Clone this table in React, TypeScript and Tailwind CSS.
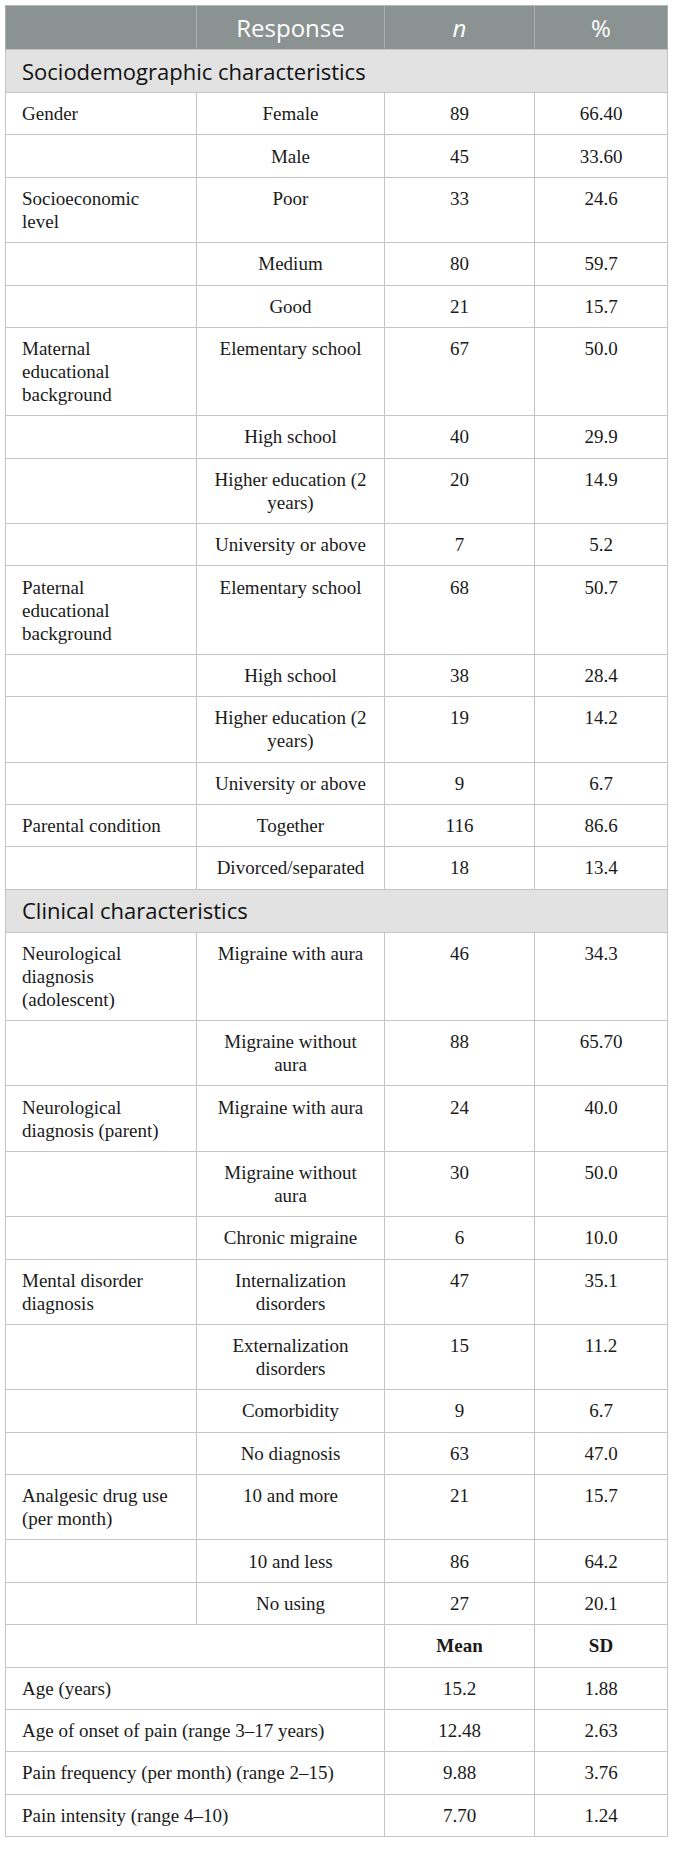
import React from "react";

type Row = {
  label?: string;
  response?: string;
  n: string;
  pct: string;
  wide?: boolean;
  bold?: boolean;
};

const socio: Row[] = [
  { label: "Gender", response: "Female", n: "89", pct: "66.40" },
  { response: "Male", n: "45", pct: "33.60" },
  { label: "Socioeconomic level", response: "Poor", n: "33", pct: "24.6" },
  { response: "Medium", n: "80", pct: "59.7" },
  { response: "Good", n: "21", pct: "15.7" },
  { label: "Maternal educational background", response: "Elementary school", n: "67", pct: "50.0" },
  { response: "High school", n: "40", pct: "29.9" },
  { response: "Higher education (2 years)", n: "20", pct: "14.9" },
  { response: "University or above", n: "7", pct: "5.2" },
  { label: "Paternal educational background", response: "Elementary school", n: "68", pct: "50.7" },
  { response: "High school", n: "38", pct: "28.4" },
  { response: "Higher education (2 years)", n: "19", pct: "14.2" },
  { response: "University or above", n: "9", pct: "6.7" },
  { label: "Parental condition", response: "Together", n: "116", pct: "86.6" },
  { response: "Divorced/separated", n: "18", pct: "13.4" },
];

const clinical: Row[] = [
  { label: "Neurological diagnosis (adolescent)", response: "Migraine with aura", n: "46", pct: "34.3" },
  { response: "Migraine without aura", n: "88", pct: "65.70" },
  { label: "Neurological diagnosis (parent)", response: "Migraine with aura", n: "24", pct: "40.0" },
  { response: "Migraine without aura", n: "30", pct: "50.0" },
  { response: "Chronic migraine", n: "6", pct: "10.0" },
  { label: "Mental disorder diagnosis", response: "Internalization disorders", n: "47", pct: "35.1" },
  { response: "Externalization disorders", n: "15", pct: "11.2" },
  { response: "Comorbidity", n: "9", pct: "6.7" },
  { response: "No diagnosis", n: "63", pct: "47.0" },
  { label: "Analgesic drug use (per month)", response: "10 and more", n: "21", pct: "15.7" },
  { response: "10 and less", n: "86", pct: "64.2" },
  { response: "No using", n: "27", pct: "20.1" },
  { label: "", n: "Mean", pct: "SD", wide: true, bold: true },
  { label: "Age (years)", n: "15.2", pct: "1.88", wide: true },
  { label: "Age of onset of pain (range 3–17 years)", n: "12.48", pct: "2.63", wide: true },
  { label: "Pain frequency (per month) (range 2–15)", n: "9.88", pct: "3.76", wide: true },
  { label: "Pain intensity (range 4–10)", n: "7.70", pct: "1.24", wide: true },
];

const cell = "border border-[#c4c4c4] align-top py-[9.2px] leading-[23px]";

function BodyRow({ row }: { row: Row }) {
  const num = row.bold ? "font-bold" : "";
  return (
    <tr>
      {row.wide ? (
        <td colSpan={2} className={`${cell} pl-4 pr-2 text-left`}>
          {row.label}
        </td>
      ) : (
        <>
          <td className={`${cell} pl-4 pr-[24px] text-left`}>{row.label}</td>
          <td className={`${cell} px-3 text-center`}>{row.response}</td>
        </>
      )}
      <td className={`${cell} px-2 text-center ${num}`}>{row.n}</td>
      <td className={`${cell} px-2 text-center ${num}`}>{row.pct}</td>
    </tr>
  );
}

function SectionRow({ title }: { title: string }) {
  return (
    <tr>
      <td
        colSpan={4}
        className="border border-[#c4c4c4] bg-[#e1e2e1] pl-4 h-[43px] align-middle text-[22px] text-[#111] font-['Open_Sans',sans-serif]"
      >
        {title}
      </td>
    </tr>
  );
}

export default function App() {
  const head = "h-[44px] align-middle text-center text-[24px] text-white font-['Open_Sans',sans-serif] font-normal border-x border-[#a9afaf]";
  return (
    <div className="min-h-screen bg-white pl-[5px] pr-[6px] pt-[5px] pb-[8px]">
      <table className="w-[662px] table-fixed border-collapse text-[19px] text-[#1a1a1a] font-['Liberation_Serif',serif]">
        <colgroup>
          <col className="w-[191px]" />
          <col className="w-[188px]" />
          <col className="w-[150px]" />
          <col className="w-[133px]" />
        </colgroup>
        <thead>
          <tr className="bg-[#8b9292] border-t border-[#b5baba]">
            <th className={head}></th>
            <th className={head}>Response</th>
            <th className={`${head} italic`}>n</th>
            <th className={head}>%</th>
          </tr>
        </thead>
        <tbody>
          <SectionRow title="Sociodemographic characteristics" />
          {socio.map((r, i) => (
            <BodyRow key={`s${i}`} row={r} />
          ))}
          <SectionRow title="Clinical characteristics" />
          {clinical.map((r, i) => (
            <BodyRow key={`c${i}`} row={r} />
          ))}
        </tbody>
      </table>
    </div>
  );
}
